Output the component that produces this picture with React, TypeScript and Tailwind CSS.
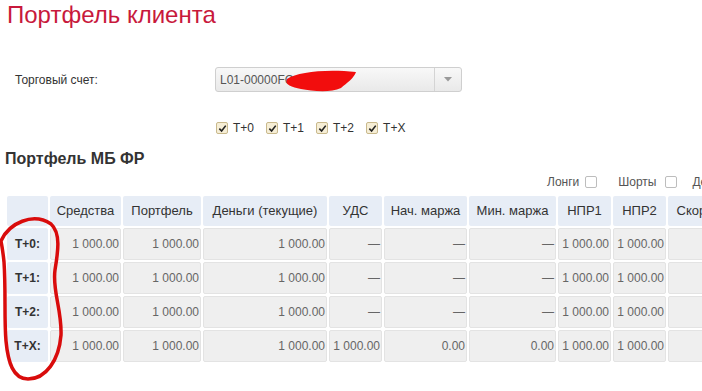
import React from "react";

const columns = ["Средства", "Портфель", "Деньги (текущие)", "УДС", "Нач. маржа", "Мин. маржа", "НПР1", "НПР2", "Скоринг"];

const rows = [
  { label: "T+0:", values: ["1 000.00", "1 000.00", "1 000.00", "—", "—", "—", "1 000.00", "1 000.00", ""] },
  { label: "T+1:", values: ["1 000.00", "1 000.00", "1 000.00", "—", "—", "—", "1 000.00", "1 000.00", ""] },
  { label: "T+2:", values: ["1 000.00", "1 000.00", "1 000.00", "—", "—", "—", "1 000.00", "1 000.00", ""] },
  { label: "T+X:", values: ["1 000.00", "1 000.00", "1 000.00", "1 000.00", "0.00", "0.00", "1 000.00", "1 000.00", ""] },
];

function CheckedBox() {
  return (
    <span className="flex h-[12px] w-[12px] items-center justify-center rounded-[2px] border border-[#c9b98c] bg-[#f6eed6]">
      <svg width="9" height="9" viewBox="0 0 10 10">
        <path d="M1.5 5.2 L4 7.8 L8.6 1.8" fill="none" stroke="#222" strokeWidth="1.8" />
      </svg>
    </span>
  );
}

function EmptyBox() {
  return <span className="inline-block h-[12px] w-[12px] rounded-[2px] border border-[#bdbdbd] bg-white" />;
}

export default function App() {
  return (
    <main
      className="relative h-[391px] w-[702px] overflow-hidden bg-white text-[#333]"
      style={{ fontFamily: '"Liberation Sans", Arial, sans-serif' }}
    >
      <h1 className="pl-[7px] pt-[1px] text-[24px] leading-[28px] text-[#c8193c]">Портфель клиента</h1>

      <div className="mt-[38px] flex items-center">
        <label className="w-[215px] pl-[15px] text-[12px] leading-[14px] text-[#333]">Торговый счет:</label>
        <div className="flex h-[25px] w-[247px] items-center rounded-[3px] border border-[#cfcfcf] bg-gradient-to-b from-[#f8f8f8] to-[#e9e9e9]">
          <span className="flex-1 pl-[4px] text-[12px] text-[#555]">L01-00000FC</span>
          <span className="flex h-full w-[27px] items-center justify-center border-l border-[#d4d4d4]">
            <svg width="8" height="5" viewBox="0 0 8 5">
              <path d="M0 0 L8 0 L4 4.5 Z" fill="#999" />
            </svg>
          </span>
        </div>
      </div>

      <div className="mt-[29px] flex items-center gap-[5px] pl-[216px] text-[12px] leading-[14px] text-[#333]">
        {["T+0", "T+1", "T+2", "T+X"].map((t) => (
          <div key={t} className="mr-[7px] flex items-center gap-[5px]">
            <CheckedBox />
            <span>{t}</span>
          </div>
        ))}
      </div>

      <h2 className="mt-[14px] pl-[5px] text-[16px] font-bold leading-[19px] text-[#333]">Портфель МБ ФР</h2>

      <div className="mt-[7px] flex items-center whitespace-nowrap pl-[547px] text-[12px] leading-[14px] text-[#555]">
        <span>Лонги</span>
        <span className="ml-[6px] flex"><EmptyBox /></span>
        <span className="ml-[21px]">Шорты</span>
        <span className="ml-[9px] flex"><EmptyBox /></span>
        <span className="ml-[15px]">Детально</span>
      </div>

      <div className="ml-[7px] mt-[7px] grid w-max grid-cols-[41px_71px_78px_124px_53px_83px_87px_53px_53px_66px] grid-rows-[30px_32px_32px_32px_32px] gap-[2px]">
        <div className="rounded-[2px] bg-[#e7edf6]" />
        {columns.map((c) => (
          <div
            key={c}
            className="flex items-center justify-center whitespace-nowrap rounded-[2px] bg-[#e7edf6] text-[13px] text-[#333]"
          >
            {c}
          </div>
        ))}
        {rows.map((r) => (
          <React.Fragment key={r.label}>
            <div className="flex items-center justify-center rounded-[2px] bg-[#e7edf6] text-[12px] font-bold text-[#333]">
              {r.label}
            </div>
            {r.values.map((v, i) => (
              <div
                key={i}
                className="flex items-center justify-end whitespace-nowrap rounded-[2px] border border-[#e3e3e3] bg-[#efefef] pr-[1px] text-[12px] text-[#666]"
              >
                {v}
              </div>
            ))}
          </React.Fragment>
        ))}
      </div>

      <svg className="pointer-events-none absolute left-0 top-0" width="702" height="391" viewBox="0 0 702 391">
        <path
          d="M287 79 C298 72 325 69 356 72 C354 78 347 83 341 88 C330 93 312 91 301 89 C292 87 284 85 287 79 Z"
          fill="#f20d0d"
        />
        <path
          d="M1 241 C9 223 33 212 51 224 C61 233 58 252 55 270 C52 290 62 310 61 335 C59 360 46 379 28 379 C13 379 8 362 6 341 C4 318 6 292 4 262 C3 252 2 246 1 241"
          fill="none"
          stroke="#d90c0c"
          strokeWidth="3.5"
          strokeLinecap="round"
        />
      </svg>
    </main>
  );
}
